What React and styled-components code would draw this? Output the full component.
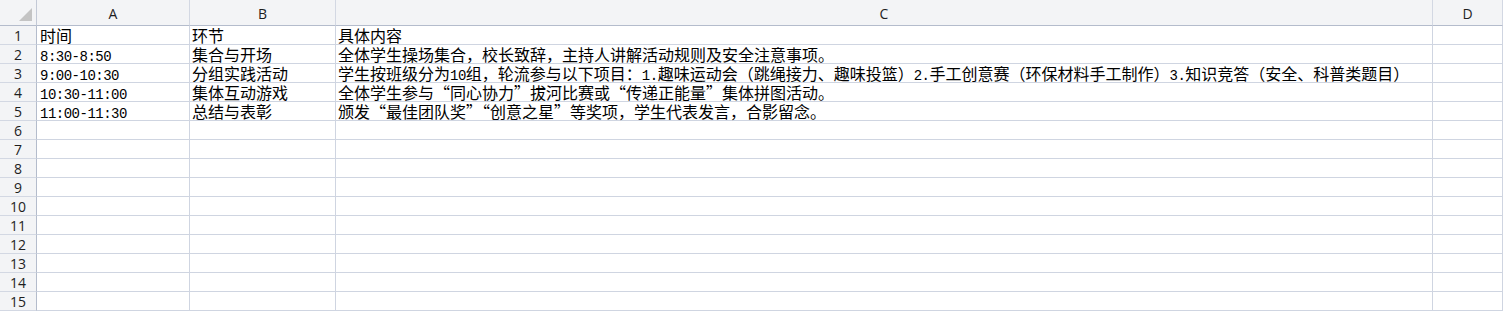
import React from "react";
import styled, { createGlobalStyle } from "styled-components";

const GlobalStyle = createGlobalStyle`
  html, body {
    margin: 0;
    padding: 0;
    background: #ffffff;
  }
  body {
    font-family: "Noto Sans CJK SC", sans-serif;
    overflow: hidden;
  }
`;

const columns = [
  { key: "A", width: "153px" },
  { key: "B", width: "146px" },
  { key: "C", width: "1097px" },
  { key: "D", width: "1fr" },
];

const rows = [
  ["时间", "环节", "具体内容"],
  ["8:30-8:50", "集合与开场", "全体学生操场集合，校长致辞，主持人讲解活动规则及安全注意事项。"],
  [
    "9:00-10:30",
    "分组实践活动",
    "学生按班级分为10组，轮流参与以下项目：1.趣味运动会（跳绳接力、趣味投篮）2.手工创意赛（环保材料手工制作）3.知识竞答（安全、科普类题目）",
  ],
  ["10:30-11:00", "集体互动游戏", "全体学生参与“同心协力”拔河比赛或“传递正能量”集体拼图活动。"],
  ["11:00-11:30", "总结与表彰", "颁发“最佳团队奖”“创意之星”等奖项，学生代表发言，合影留念。"],
];

const TOTAL_ROWS = 15;

const Sheet = styled.div`
  display: grid;
  grid-template-columns: 37px ${columns.map((c) => c.width).join(" ")};
  grid-auto-rows: 19px;
  grid-template-rows: 26px;
  width: 1503px;
`;

const Corner = styled.div`
  position: relative;
  background: #f3f4f6;
  border-right: 1px solid #c3c9d6;
  border-bottom: 1px solid #b4bccc;
  box-sizing: border-box;

  &::after {
    content: "";
    position: absolute;
    right: 4px;
    bottom: 4px;
    width: 0;
    height: 0;
    border-left: 13px solid transparent;
    border-bottom: 13px solid #c4c4c4;
  }
`;

const ColHead = styled.div`
  display: flex;
  align-items: center;
  justify-content: center;
  background: #f3f4f6;
  border-right: 1px solid #d3d8e3;
  border-bottom: 1px solid #b4bccc;
  box-sizing: border-box;
  font-family: "Open Sans", "Liberation Sans", sans-serif;
  font-size: 14px;
  color: #1e1e1e;
  padding-top: 2px;
`;

const RowHead = styled.div`
  display: flex;
  align-items: center;
  justify-content: center;
  background: #f3f4f6;
  border-right: 1px solid #b4bccc;
  border-bottom: 1px solid #d3d8e3;
  box-sizing: border-box;
  font-family: "Open Sans", "Liberation Sans", sans-serif;
  font-size: 14px;
  color: #1e1e1e;
`;

const Cell = styled.div`
  display: block;
  padding-left: ${(p) => (p.$col === 0 ? "3px" : "2px")};
  border-right: 1px solid #cfd5e1;
  border-bottom: 1px solid #cfd5e1;
  box-sizing: border-box;
  font-size: 16px;
  line-height: 19px;
  height: 19px;
  color: #000;
  white-space: nowrap;
  min-width: 0;
`;

const Latin = styled.span`
  font-family: "Liberation Mono", monospace;
  font-size: 14px;
  letter-spacing: -0.5px;
`;

function renderText(text) {
  if (!text) return "";
  return text.split(/([\x20-\x7e]+)/).map((part, i) =>
    /^[\x20-\x7e]+$/.test(part) ? <Latin key={i}>{part}</Latin> : part
  );
}

export default function App() {
  return (
    <>
      <GlobalStyle />
      <Sheet>
        <Corner />
        {columns.map((c) => (
          <ColHead key={c.key}>{c.key}</ColHead>
        ))}
        {Array.from({ length: TOTAL_ROWS }).map((_, r) => (
          <React.Fragment key={r}>
            <RowHead>{r + 1}</RowHead>
            {columns.map((c, ci) => (
              <Cell key={c.key} $col={ci}>
                {renderText(rows[r] && rows[r][ci])}
              </Cell>
            ))}
          </React.Fragment>
        ))}
      </Sheet>
    </>
  );
}
